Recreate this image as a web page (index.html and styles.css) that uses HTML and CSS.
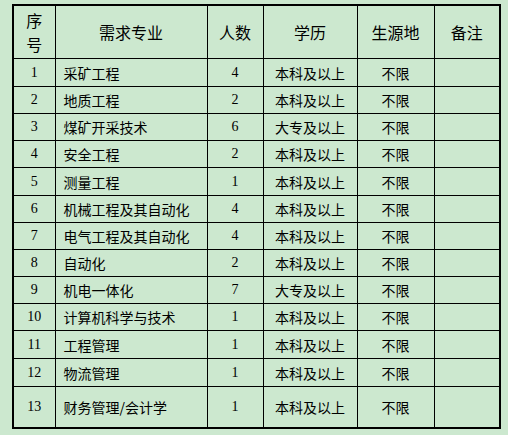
FILE: index.html
```html
<!DOCTYPE html>
<html lang="zh">
<head>
<meta charset="utf-8">
<link rel="stylesheet" href="styles.css">
</head>
<body>
<table class="jobs">
  <colgroup>
    <col class="c-no"><col class="c-major"><col class="c-num"><col class="c-edu"><col class="c-src"><col class="c-note">
  </colgroup>
  <thead>
    <tr class="head">
      <th>序<br>号</th><th>需求专业</th><th>人数</th><th>学历</th><th>生源地</th><th>备注</th>
    </tr>
  </thead>
  <tbody>
    <tr class="r28"><td class="num">1</td><td class="major">采矿工程</td><td class="num">4</td><td>本科及以上</td><td>不限</td><td></td></tr>
    <tr><td class="num">2</td><td class="major">地质工程</td><td class="num">2</td><td>本科及以上</td><td>不限</td><td></td></tr>
    <tr><td class="num">3</td><td class="major">煤矿开采技术</td><td class="num">6</td><td>大专及以上</td><td>不限</td><td></td></tr>
    <tr><td class="num">4</td><td class="major">安全工程</td><td class="num">2</td><td>本科及以上</td><td>不限</td><td></td></tr>
    <tr class="r28"><td class="num">5</td><td class="major">测量工程</td><td class="num">1</td><td>本科及以上</td><td>不限</td><td></td></tr>
    <tr><td class="num">6</td><td class="major">机械工程及其自动化</td><td class="num">4</td><td>本科及以上</td><td>不限</td><td></td></tr>
    <tr><td class="num">7</td><td class="major">电气工程及其自动化</td><td class="num">4</td><td>本科及以上</td><td>不限</td><td></td></tr>
    <tr><td class="num">8</td><td class="major">自动化</td><td class="num">2</td><td>本科及以上</td><td>不限</td><td></td></tr>
    <tr><td class="num">9</td><td class="major">机电一体化</td><td class="num">7</td><td>大专及以上</td><td>不限</td><td></td></tr>
    <tr><td class="num">10</td><td class="major">计算机科学与技术</td><td class="num">1</td><td>本科及以上</td><td>不限</td><td></td></tr>
    <tr class="r28"><td class="num">11</td><td class="major">工程管理</td><td class="num">1</td><td>本科及以上</td><td>不限</td><td></td></tr>
    <tr class="r28"><td class="num">12</td><td class="major">物流管理</td><td class="num">1</td><td>本科及以上</td><td>不限</td><td></td></tr>
    <tr class="r41"><td class="num">13</td><td class="major">财务管理/会计学</td><td class="num">1</td><td>本科及以上</td><td>不限</td><td></td></tr>
  </tbody>
</table>
</body>
</html>
```

FILE: styles.css
```css
html, body {
  margin: 0;
  padding: 0;
  background: #cce8cf;
}
body {
  padding: 4px 0 0 12px;
  font-family: "Noto Sans CJK SC", sans-serif;
  color: #000;
}
.jobs {
  border-collapse: collapse;
  table-layout: fixed;
  width: 489px;
  border: 2px solid #000;
}
.c-no { width: 42px; }
.c-major { width: 152px; }
.c-num { width: 56px; }
.c-edu { width: 94px; }
.c-src { width: 77px; }
.c-note { width: 66px; }
.jobs th, .jobs td {
  border: 1px solid #000;
  padding: 0;
  text-align: center;
  vertical-align: middle;
  font-size: 14px;
  line-height: 16px;
  font-weight: normal;
  overflow: hidden;
}
.jobs th {
  font-size: 16px;
  line-height: 24px;
  height: 52px;
}
.jobs td { height: 26px; }
.jobs tr.r28 td { height: 27px; }
.jobs tr.r41 td { height: 40px; }
.jobs td.major {
  text-align: left;
  padding-left: 8px;
}
.jobs td.num {
  font-family: "Liberation Serif", serif;
  font-size: 14px;
}
```
